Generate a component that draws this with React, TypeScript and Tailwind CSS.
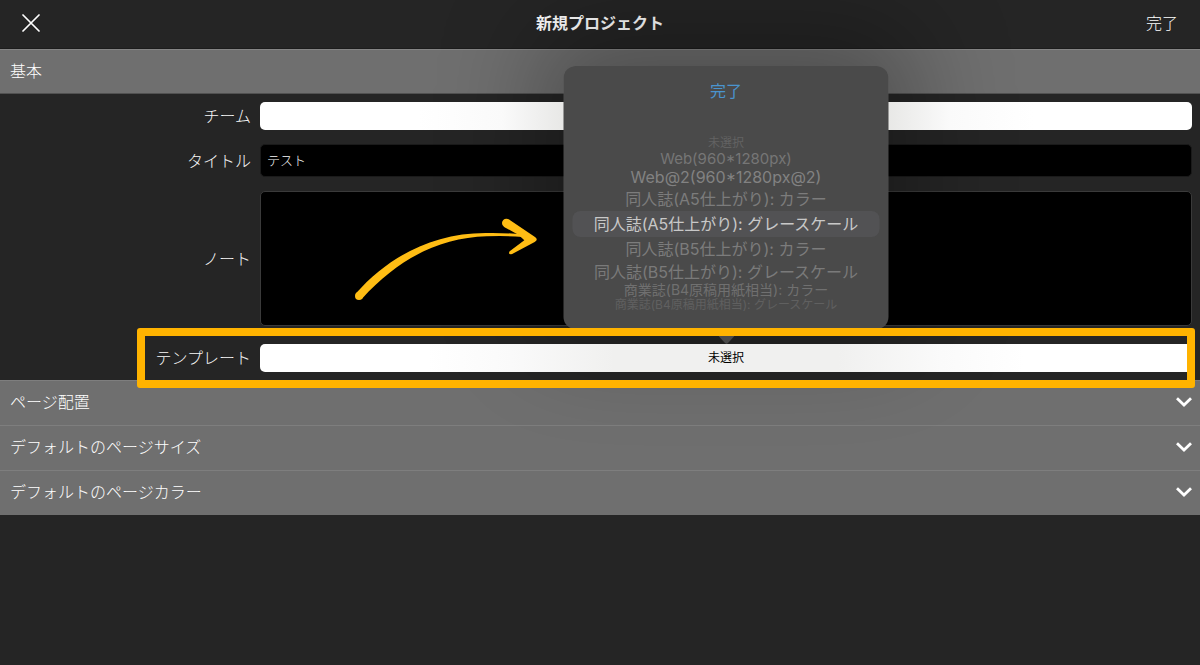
import { useState } from "react";

type WheelRow = { label: string; style: string };

const wheelRows: WheelRow[] = [
  { label: "未選択", style: "h-[14px] text-xs text-[#626262]" },
  { label: "Web(960*1280px)", style: "h-4 text-[15px] text-[#767676]" },
  { label: "Web@2(960*1280px@2)", style: "h-[21px] text-base text-[#828282]" },
  { label: "同人誌(A5仕上がり): カラー", style: "h-6 text-base text-[#7c7c7c]" },
  { label: "同人誌(A5仕上がり): グレースケール", style: "h-[26px] rounded-lg bg-[#525254] text-base text-[#c8c8c8]" },
  { label: "同人誌(B5仕上がり): カラー", style: "h-6 text-base text-[#7c7c7c]" },
  { label: "同人誌(B5仕上がり): グレースケール", style: "h-[21px] text-base text-[#7a7a7a]" },
  { label: "商業誌(B4原稿用紙相当): カラー", style: "h-4 text-sm text-[#707070]" },
  { label: "商業誌(B4原稿用紙相当): グレースケール", style: "h-[14px] text-xs text-[#606060]" },
];

const selectedIndex = 4;

const sections = ["ページ配置", "デフォルトのページサイズ", "デフォルトのページカラー"];

const labelStyle = "w-[251px] shrink-0 text-right text-base leading-6 text-[#f8f8f8]";

function CloseIcon() {
  return (
    <svg viewBox="0 0 18 18" className="size-[18px]" fill="none" stroke="currentColor" strokeWidth="1.7" strokeLinecap="round" aria-hidden="true">
      <path d="M1 1 17 17M17 1 1 17" />
    </svg>
  );
}

function ChevronIcon() {
  return (
    <svg viewBox="0 0 16 10" className="h-[10px] w-4" fill="none" stroke="currentColor" strokeWidth="2.8" aria-hidden="true">
      <path d="M1 1.2 8 8 15 1.2" />
    </svg>
  );
}

function GuideArrow() {
  return (
    <svg viewBox="0 0 660 360" className="pointer-events-none absolute top-[9px] left-[340px] z-10 h-[120px] w-[220px] fill-[#ffbd14]" aria-hidden="true">
      <circle cx="57" cy="288" r="12" />
      <path d="M48 280 C142 174 274 98 440 99 Q500 98 548 104 L548 111 Q500 107 440 109 C300 113 176 175 66 296Z" />
      <circle cx="499" cy="69" r="13" />
      <path d="M506 58 L585 111 Q596 119 584 126 L515 163 L509 154 L553 121 L536 105 L491 80Z" />
      <circle cx="512" cy="158" r="5" />
    </svg>
  );
}

function TemplatePicker() {
  return (
    <div className="absolute bottom-[43px] left-1/2 z-20 h-[263px] w-[325px] -translate-x-1/2 rounded-xl bg-[#4a4a4a] px-[9px] font-normal" role="dialog" aria-label="テンプレート">
      <div className="flex h-[70px] items-start justify-center pt-[13px]">
        <button type="button" className="text-base leading-6 text-[#4a94cf]">
          完了
        </button>
      </div>
      <div role="listbox" aria-label="テンプレート" className="flex flex-col">
        {wheelRows.map((row, i) => (
          <button key={row.label} type="button" role="option" aria-selected={i === selectedIndex} className={`flex items-center justify-center leading-none whitespace-nowrap ${row.style}`}>
            {row.label}
          </button>
        ))}
      </div>
      <svg viewBox="0 0 16 15" className="absolute top-full left-1/2 h-[15px] w-4 -translate-x-1/2 fill-[#4a4a4a]" aria-hidden="true">
        <path d="M0 0H16V7L9.5 14Q8 15.5 6.5 14L0 7Z" />
      </svg>
    </div>
  );
}

export default function App() {
  const [title, setTitle] = useState("テスト");
  const [note, setNote] = useState("");

  return (
    <div className="min-h-screen overflow-x-hidden bg-[#252525] font-['Inter','Noto_Sans_CJK_JP',sans-serif] font-light text-white">
      <header className="grid h-[49px] grid-cols-[1fr_auto_1fr] items-center border-b border-[#1c1c1c] px-[22px] pb-0.5">
        <button type="button" aria-label="閉じる" className="justify-self-start">
          <CloseIcon />
        </button>
        <h1 className="text-base leading-6 font-semibold">新規プロジェクト</h1>
        <button type="button" className="justify-self-end text-base leading-6">
          完了
        </button>
      </header>

      <main>
        <h2 className="flex h-[45px] items-center border-y border-t-[#858585] border-b-[#515151] bg-[#6f6f6f] px-[10px] pb-0.5 text-base leading-6 text-white">
          基本
        </h2>

        <form className="flex flex-col py-2 pr-2" onSubmit={(e) => e.preventDefault()}>
          <div className="mb-[14px] flex items-center gap-[9px]">
            <label htmlFor="team" className={labelStyle}>
              チーム
            </label>
            <select
              id="team"
              className="relative z-10 h-7 min-w-0 flex-1 appearance-none rounded-[5px] bg-[linear-gradient(to_right,#fff_17%,#fafafa_26%,#e4e4e2_34%,#e4e4e2_66%,#fafafa_74%,#fff_83%)] text-black"
            >
              <option value="" />
            </select>
          </div>

          <div className="mb-[14px] flex items-center gap-[9px]">
            <label htmlFor="title" className={labelStyle}>
              タイトル
            </label>
            <input
              id="title"
              value={title}
              onChange={(e) => setTitle(e.target.value)}
              className="h-[33px] min-w-0 flex-1 rounded-[5px] border border-[#1a1a1a] bg-black px-1.5 pb-0.5 text-[13px] text-[#f8f8f8]"
            />
          </div>

          <div className="relative mb-[18px] flex items-center gap-[9px]">
            <label htmlFor="note" className={labelStyle}>
              ノート
            </label>
            <textarea
              id="note"
              value={note}
              onChange={(e) => setNote(e.target.value)}
              className="h-[135px] min-w-0 flex-1 resize-none rounded-[5px] border border-[#3a3a3a] bg-black px-1.5 py-1 text-[13px] text-[#f8f8f8]"
            />
            <GuideArrow />
          </div>

          <div className="relative flex items-center gap-[9px]">
            <label htmlFor="template" className={labelStyle}>
              テンプレート
            </label>
            <div className="relative flex min-w-0 flex-1">
              <div className="pointer-events-none absolute bottom-[43px] left-1/2 h-[263px] w-[325px] -translate-x-1/2 rounded-xl shadow-[0_-14px_100px_26px_rgba(0,0,0,0.29)]" />
              <select
                id="template"
                className="relative z-10 h-7 w-full appearance-none rounded-[5px] bg-[linear-gradient(to_right,#fff_18%,#fafafa_27%,#f0f0ef_38%,#f0f0ef_62%,#fafafa_73%,#fff_82%)] text-center text-xs font-normal text-black [text-align-last:center]"
              >
                <option>未選択</option>
              </select>
              <TemplatePicker />
            </div>
            <div className="pointer-events-none absolute -inset-y-4 -right-[3px] left-[137px] z-30 rounded-[3px] border-8 border-[#ffb300]" />
          </div>
        </form>

        <div>
          {sections.map((name) => (
            <h2 key={name}>
              <button
                type="button"
                aria-expanded={false}
                className="flex h-[45px] w-full items-center justify-between border-t border-[#7e7e7e] bg-[#6f6f6f] pr-2 pb-0.5 pl-[10px] text-left text-base leading-6 text-white"
              >
                {name}
                <ChevronIcon />
              </button>
            </h2>
          ))}
        </div>
      </main>
    </div>
  );
}
